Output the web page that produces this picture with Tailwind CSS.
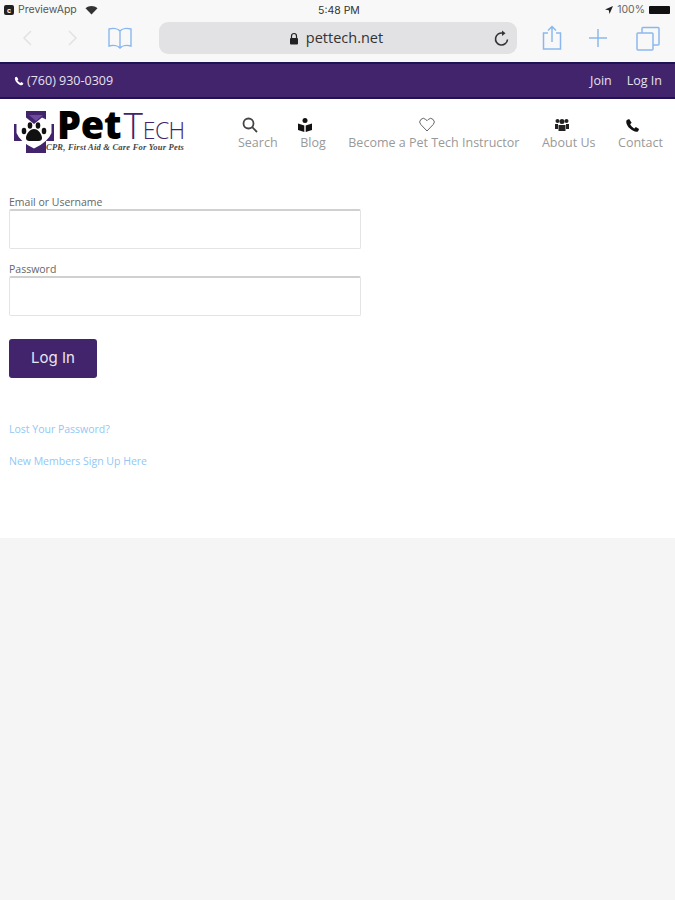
<!DOCTYPE html>
<html lang="en">
<head>
    <meta charset="UTF-8">
    <meta name="viewport" content="width=device-width, initial-scale=1.0">
    <title>Log In - Pet Tech</title>
    <script src="https://cdn.jsdelivr.net/npm/@tailwindcss/browser@4"></script>
</head>
<body class="bg-[#f5f5f5] font-['Open_Sans',sans-serif]">
<div class="w-[675px] h-[900px] overflow-hidden flex flex-col">

    <!-- ios status bar -->
    <div class="h-[19px] bg-[#f8f8f8] flex items-center justify-between pl-1 pr-[5px] pt-[1px] text-[10.500px] text-[#555] font-['Inter',sans-serif] relative">
        <div class="flex items-center gap-1">
            <span class="w-[10px] h-[10px] rounded-[2px] bg-[#222] flex items-center justify-center text-white text-[7px] font-bold leading-none">c</span>
            <span>PreviewApp</span>
            <svg class="ml-[4px]" width="13" height="10" viewBox="0 0 13 10"><path d="M.5 3.2C4 .2 9 .2 12.500 3.200L6.500 9.500Z" fill="#333"/></svg>
        </div>
        <span class="absolute left-[318px] top-[3px] text-[#333]">5:48 PM</span>
        <div class="flex items-center gap-[4px]">
            <svg width="8" height="8" viewBox="0 0 8 8"><path d="M8 0L0 3.500 3.800 4.200 4.500 8Z" fill="#222"/></svg>
            <span class="text-[#666]">100%</span>
            <div class="w-[21px] h-[8px] bg-[#111] rounded-[1px]"></div>
        </div>
    </div>

    <!-- safari toolbar -->
    <div class="h-[43px] bg-[#f8f8f8] flex items-center relative pb-[5px]">
        <svg class="ml-[21px]" width="12" height="18" viewBox="0 0 12 18" fill="none" stroke="#e2e2e2" stroke-width="1.500"><path d="M10 2L3 9l7 7"/></svg>
        <svg class="ml-[34px]" width="12" height="18" viewBox="0 0 12 18" fill="none" stroke="#e2e2e2" stroke-width="1.500"><path d="M2 2l7 7-7 7"/></svg>
        <svg class="ml-[28px]" width="26" height="24" viewBox="0 0 26 24" fill="none" stroke="#8ab8ee" stroke-width="1.400"><path d="M13 5C11 2.500 6 2 2 3v17c4-1 9-.5 11 2 2-2.500 7-3 11-2V3c-4-1-9-.5-11 2zM13 5v17"/></svg>
        <div class="ml-[26px] w-[358px] h-[32px] bg-[#e2e2e5] rounded-[9px] flex items-center justify-center relative text-[#333] text-[14.500px]">
            <svg class="mr-[7px]" width="10" height="13" viewBox="0 0 10 13"><path d="M2.500 6V4a2.500 2.500 0 0 1 5 0v2" fill="none" stroke="#222" stroke-width="1.200"/><rect x="1" y="6" width="8" height="6.500" rx="1" fill="#222"/></svg>
            <span class="mr-[4px]">pettech.net</span>
            <svg class="absolute right-[7px] top-[8px]" width="16" height="17" viewBox="0 0 16 17" fill="none" stroke="#333" stroke-width="1.600"><path d="M13.500 9.500A6 6 0 1 1 9 3.200"/><path d="M8 .5l3.500 2.700L8 6" fill="#333" stroke="none"/></svg>
        </div>
        <svg class="ml-[25px]" width="20" height="26" viewBox="0 0 20 26" fill="none" stroke="#8ab8ee" stroke-width="1.500"><path d="M6 8H1.500v16h17V8H14M10 17V2M6 5.500L10 1.500l4 4"/></svg>
        <svg class="ml-[26px]" width="20" height="20" viewBox="0 0 20 20" fill="none" stroke="#8ab8ee" stroke-width="1.500"><path d="M10 1v18M1 10h18"/></svg>
        <svg class="ml-[28px]" width="24" height="25" viewBox="0 0 24 25" fill="none" stroke="#8ab8ee" stroke-width="1.500"><rect x="1" y="7" width="16" height="17" rx="1"/><path d="M6 7V2.500a1 1 0 0 1 1-1h15a1 1 0 0 1 1 1V18a1 1 0 0 1-1 1h-5"/></svg>
    </div>

    <!-- top purple bar -->
    <div class="h-[37px] bg-[#41246c] border-y-2 border-[#1f1356] flex items-center justify-between pl-[14px] pr-[13px] pt-[1px] text-[12.500px] text-[#e6e0ef]">
        <div class="flex items-center gap-[3px]">
            <svg width="10" height="10" viewBox="0 0 24 24" fill="#fff"><path d="M6.600 1.500L3 3C1 5 2 11 7.500 16.500S19 23 21 21l1.500-3.600-5.200-3-2.300 2.300c-1.600-.5-6.200-5-6.700-6.700l2.300-2.300z"/></svg>
            <span>(760) 930-0309</span>
        </div>
        <div class="flex items-center gap-[15px]">
            <span>Join</span>
            <span>Log In</span>
        </div>
    </div>

    <!-- logo and nav -->
    <div class="h-[68px] bg-white flex items-start">
        <div class="w-[176px] h-[54px] ml-[14px] mt-[12px] relative shrink-0">
            <svg class="absolute left-0 top-0" width="40" height="42" viewBox="0 0 40 42">
                <path d="M12 0h20v13h8v17H32v12H12V30H0V13h12z" fill="#41246c"/>
                <path d="M2.500 11L12 6.500 20 13l8-6.500 9.500 4.500v11Q34 31 20 37.500 6 31 2.500 22z" fill="#fff"/>
                <path d="M15 4h14l-7 6z" fill="#6d4aa0"/>
                <path d="M20 18c4 0 8 5 8 9 0 4-5 3-8 3s-8 1-8-3c0-4 4-9 8-9z" fill="#111"/>
                <ellipse cx="10" cy="20" rx="2.300" ry="3.300" fill="#111"/>
                <ellipse cx="16" cy="14.500" rx="2.300" ry="3.300" fill="#111"/>
                <ellipse cx="24" cy="14.500" rx="2.300" ry="3.300" fill="#111"/>
                <ellipse cx="30" cy="20" rx="2.300" ry="3.300" fill="#111"/>
            </svg>
            <div class="absolute left-[43px] top-[-6px] flex items-baseline leading-none whitespace-nowrap">
                <span class="text-[38px] font-extrabold text-black tracking-[-0.2px]">Pet</span>
                <span class="text-[37px] font-light text-[#41246c] ml-[2px]">T</span>
                <span class="text-[23px] font-light text-[#41246c] tracking-[-0.6px]">ECH</span>
            </div>
            <div class="absolute left-[32px] top-[32px] text-[8.500px] leading-none italic font-bold text-[#444] font-['Liberation_Serif',serif] tracking-[0.22px] whitespace-nowrap">CPR, First Aid &amp; Care For Your Pets</div>
        </div>
        <nav class="flex-1 flex justify-between ml-[48px] pr-[12px] pt-[18px] text-[12.500px] text-[#999] text-center whitespace-nowrap">
            <div class="flex flex-col items-center">
                <svg class="-ml-[16px]" width="16" height="16" viewBox="0 0 16 16" fill="none" stroke="#444" stroke-width="1.800"><circle cx="6.500" cy="6.500" r="5"/><path d="M10.200 10.200L15 15"/></svg>
                <span class="mt-[1px]">Search</span>
            </div>
            <div class="flex flex-col items-center">
                <svg class="-ml-[16px]" width="16" height="16" viewBox="0 0 16 16" fill="#111"><circle cx="8" cy="3.500" r="2.500"/><path d="M1 6.500l6.300 2V15L1 13zM15 6.500l-6.300 2V15l6.300-2z"/></svg>
                <span class="mt-[1px]">Blog</span>
            </div>
            <div class="flex flex-col items-center">
                <svg class="-ml-[14px]" width="16" height="16" viewBox="0 0 16 16" fill="none" stroke="#666" stroke-width="1"><path d="M8 14L1.800 7.500a3.600 3.600 0 0 1 0-5 3.500 3.500 0 0 1 5 0L8 3.700l1.200-1.200a3.500 3.500 0 0 1 5 0 3.600 3.600 0 0 1 0 5z"/></svg>
                <span class="mt-[1px]">Become a Pet Tech Instructor</span>
            </div>
            <div class="flex flex-col items-center">
                <svg class="-ml-[14px]" width="16" height="16" viewBox="0 0 16 16" fill="#222"><circle cx="3.500" cy="4" r="2"/><circle cx="12.500" cy="4" r="2"/><circle cx="8" cy="4.500" r="2.500"/><path d="M1 7h3v5H1zM12 7h3v5h-3zM4.500 8h7v6h-7z"/></svg>
                <span class="mt-[1px]">About Us</span>
            </div>
            <div class="flex flex-col items-center">
                <svg class="-ml-[16px] my-[0.5px]" width="15" height="15" viewBox="0 0 24 24" fill="#111"><path d="M6.600 1.500L3 3C1 5 2 11 7.500 16.500S19 23 21 21l1.500-3.600-5.200-3-2.300 2.300c-1.600-.5-6.200-5-6.700-6.700l2.300-2.300z"/></svg>
                <span class="mt-[1px]">Contact</span>
            </div>
        </nav>
    </div>

    <!-- login form -->
    <div class="h-[371px] bg-white pl-[9px] pt-[29px] text-[10.500px] text-[#666]">
        <label class="block leading-[13px]">Email or Username</label>
        <input type="text" class="block w-[352px] h-[40px] bg-white border border-[#e4e4e4] border-t-2 border-t-[#d0d0d0] rounded-[2px]">
        <label class="block leading-[13px] mt-[14px]">Password</label>
        <input type="password" class="block w-[352px] h-[40px] bg-white border border-[#e4e4e4] border-t-2 border-t-[#d0d0d0] rounded-[2px]">
        <button class="block w-[88px] h-[39px] mt-[23px] bg-[#41246c] rounded-[3px] text-[#e9e4f1] text-[15px] font-['Inter',sans-serif]">Log In</button>
        <a href="#" class="block mt-[44px] leading-[14px] text-[#92c7f5]">Lost Your Password?</a>
        <a href="#" class="block mt-[18px] leading-[14px] text-[#92c7f5]">New Members Sign Up Here</a>
    </div>
</div>
</body>
</html>
